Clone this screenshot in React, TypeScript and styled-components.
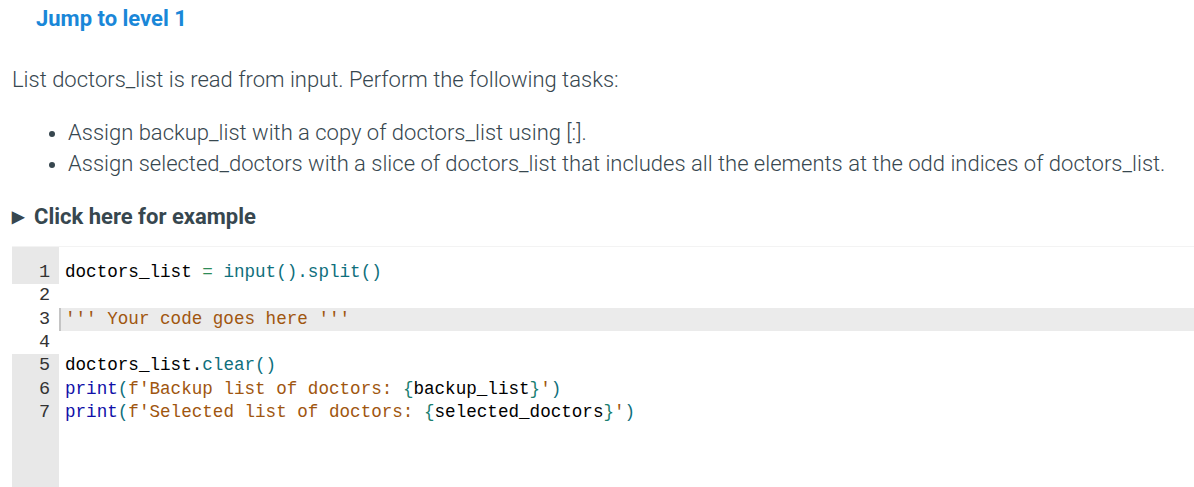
import styled, { createGlobalStyle } from "styled-components";

const GlobalStyle = createGlobalStyle`
  body {
    margin: 0;
    background: #ffffff;
    font-family: Roboto, "Noto Sans", sans-serif;
    color: #37474f;
  }
`;

const Page = styled.div`
  width: 1194px;
  height: 487px;
  overflow: hidden;
  display: flex;
  flex-direction: column;
`;

const LevelLink = styled.div`
  padding-left: 36px;
  height: 38px;
  line-height: 38px;
  font-size: 22px;
  font-weight: 700;
  color: #1a87d8;
`;

const Prompt = styled.p`
  margin: 27px 0 0 12px;
  font-size: 22px;
  font-weight: 300;
  line-height: 30px;
`;

const Tasks = styled.ul`
  margin: 22px 0 0 0;
  padding-left: 68px;
  font-size: 22px;
  font-weight: 300;
  line-height: 31px;

  li::marker {
    font-size: 19px;
  }
`;

const Summary = styled.div`
  margin: 22px 0 0 12px;
  height: 30px;
  display: flex;
  align-items: center;
  gap: 5px;
  font-size: 22px;
  font-weight: 700;
  color: #37474f;
`;

const Arrow = styled.span`
  font-size: 16px;
  width: 17px;
`;

const Editor = styled.div`
  margin: 15px 0 0 12px;
  flex: 1;
  display: grid;
  grid-template-columns: 47px 1fr;
  grid-template-rows: 14px;
  grid-auto-rows: 23.33px;
  border-top: 1px solid #f3f3f3;
  font-family: "Liberation Mono", "DejaVu Sans Mono", monospace;
  font-size: 17.6px;
  color: #000;
`;

const GutterPad = styled.div`
  background: #e8e8e8;
`;

const LinePad = styled.div``;

const Num = styled.div<{ $locked: boolean }>`
  background: ${(p) => (p.$locked ? "#e8e8e8" : "#ffffff")};
  text-align: right;
  padding-right: 9px;
  line-height: 23.33px;
  font-size: 18.5px;
  color: #333;
`;

const Line = styled.div<{ $active?: boolean }>`
  line-height: 23.33px;
  white-space: pre;
  padding-left: ${(p) => (p.$active ? "4px" : "6px")};
  background: ${(p) => (p.$active ? "#ebebeb" : "transparent")};
  border-left: ${(p) => (p.$active ? "2px solid #c4c4c4" : "none")};
`;

const GutterFill = styled.div`
  background: #e8e8e8;
  height: 100px;
`;

const Builtin = styled.span`
  color: #1010a8;
`;
const Call = styled.span`
  color: #0f6f7c;
`;
const Op = styled.span`
  color: #2e8b57;
`;
const Str = styled.span`
  color: #a0560f;
`;
const Brace = styled.span`
  color: #1a8070;
`;

function App() {
  return (
    <Page>
      <GlobalStyle />
      <LevelLink>Jump to level 1</LevelLink>
      <Prompt>List doctors_list is read from input. Perform the following tasks:</Prompt>
      <Tasks>
        <li>Assign backup_list with a copy of doctors_list using [:].</li>
        <li>
          Assign selected_doctors with a slice of doctors_list that includes all the elements at the odd
          indices of doctors_list.
        </li>
      </Tasks>
      <Summary>
        <Arrow>▶</Arrow>
        Click here for example
      </Summary>
      <Editor>
        <GutterPad />
        <LinePad />

        <Num $locked>1</Num>
        <Line>
          doctors_list <Op>=</Op> <Call>input().split()</Call>
        </Line>

        <Num $locked={false}>2</Num>
        <Line> </Line>

        <Num $locked={false}>3</Num>
        <Line $active>
          <Str>''' Your code goes here '''</Str>
        </Line>

        <Num $locked={false}>4</Num>
        <Line> </Line>

        <Num $locked>5</Num>
        <Line>
          doctors_list.<Call>clear()</Call>
        </Line>

        <Num $locked>6</Num>
        <Line>
          <Builtin>print</Builtin>
          <Call>(</Call>
          <Str>f'Backup list of doctors: </Str>
          <Brace>{"{"}</Brace>backup_list<Brace>{"}"}</Brace>
          <Str>'</Str>
          <Call>)</Call>
        </Line>

        <Num $locked>7</Num>
        <Line>
          <Builtin>print</Builtin>
          <Call>(</Call>
          <Str>f'Selected list of doctors: </Str>
          <Brace>{"{"}</Brace>selected_doctors<Brace>{"}"}</Brace>
          <Str>'</Str>
          <Call>)</Call>
        </Line>

        <GutterFill />
        <LinePad />
      </Editor>
    </Page>
  );
}

export default App;
